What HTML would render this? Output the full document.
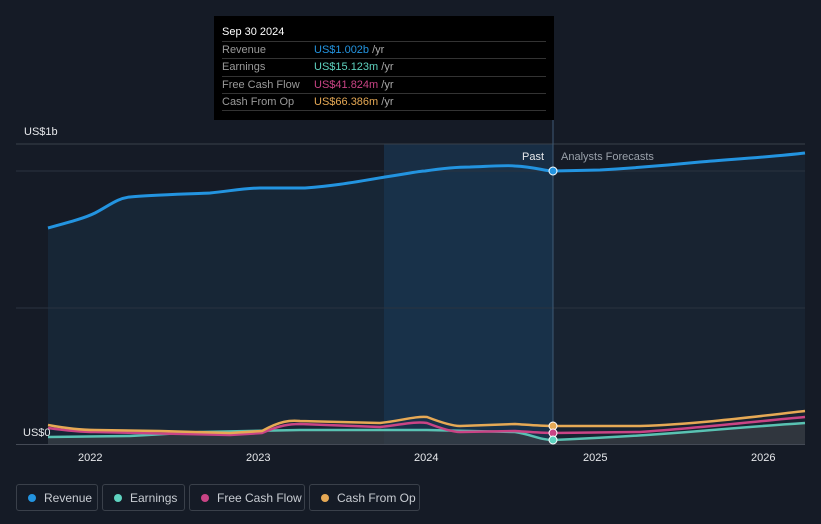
<!DOCTYPE html>
<html><head><style>
body{margin:0;background:#151b26;width:821px;height:524px;overflow:hidden;font-family:"Liberation Sans",sans-serif}
.leg{position:absolute;top:484px;height:27px;border:1px solid #3a404a;border-radius:3px;color:#c8ccd2;font-size:12px;line-height:27px;box-sizing:border-box;padding-left:27px}
.leg i{position:absolute;left:11px;top:9px;width:8px;height:8px;border-radius:50%}
</style></head><body>
<svg width="821" height="524" style="position:absolute;left:0;top:0">
<path d="M48,228 C70,222 85,218 95,213 C110,205 118,198 130,197 C150,195 190,194 210,193 C230,191 245,188 260,188 L305,188 C330,186 345,184 385,177 C405,174 420,171 425,171 C445,168 460,167 470,167 C495,166 510,165 515,166 C535,167 545,171 553,171 L553,444 L48,444Z" fill="#172636"/>
<rect x="384" y="144" width="169" height="300" fill="#1a3550" opacity="0.75"/>
<path d="M553,171 L600,170 C650,167 680,164 700,162 C750,158 780,156 805,153 L805,444 L553,444Z" fill="#182331"/>
<line x1="16" y1="144" x2="805" y2="144" stroke="#39404b"/>
<line x1="16" y1="171" x2="805" y2="171" stroke="#2a3340"/>
<line x1="16" y1="308" x2="805" y2="308" stroke="#2a3340"/>
<line x1="553" y1="120" x2="553" y2="444" stroke="#3e5a75"/>
<path d="M48,228 C70,222 85,218 95,213 C110,205 118,198 130,197 C150,195 190,194 210,193 C230,191 245,188 260,188 L305,188 C330,186 345,184 385,177 C405,174 420,171 425,171 C445,168 460,167 470,167 C495,166 510,165 515,166 C535,167 545,171 553,171 L600,170 C650,167 680,164 700,162 C750,158 780,156 805,153" fill="none" stroke="#2394e0" stroke-width="3"/>
<path d="M48,437 L130,436 L200,432 L300,430 L427,430 L515,432 C530,434 540,440 553,440 C600,438 640,436 700,431 C760,426 790,424 805,423 L805,444 L48,444Z" fill="#3a3e45" opacity="0.7"/>
<path d="M48,437 L130,436 L200,432 L300,430 L427,430 L515,432 C530,434 540,440 553,440 C600,438 640,436 700,431 C760,426 790,424 805,423" fill="none" stroke="#5fd3c0" stroke-width="2.5" opacity="0.9"/>
<path d="M48,428 C70,431 85,432 95,432 L230,435 L262,433 C280,425 290,424 300,424 L380,427 C400,425 415,421 427,423 C445,430 455,432 460,432 L515,431 C530,432 540,433 553,433 L640,432 C700,428 760,421 805,417" fill="none" stroke="#c94485" stroke-width="2.5"/>
<path d="M48,425 C70,429 85,430 95,430 L160,431 L230,433 L262,431 C280,421 290,420 300,421 L380,423 C400,421 415,416 427,417 C445,424 455,426 460,426 L515,424 C530,425 540,426 553,426 L640,426 C700,424 760,416 805,411" fill="none" stroke="#e6a955" stroke-width="2.5"/>
<line x1="16" y1="444.5" x2="805" y2="444.5" stroke="#444a55"/>
<circle cx="553" cy="171" r="4" fill="#2394e0" stroke="#fff" stroke-width="1"/>
<circle cx="553" cy="426" r="4" fill="#e6a955" stroke="#fff" stroke-width="1"/>
<circle cx="553" cy="433" r="4" fill="#c94485" stroke="#fff" stroke-width="1"/>
<circle cx="553" cy="440" r="4" fill="#5fd3c0" stroke="#fff" stroke-width="1"/>
<g font-size="11" fill="#e6e8eb" font-family="Liberation Sans">
<text x="24" y="135">US$1b</text>
<text x="23" y="436">US$0</text>
<text x="522" y="160">Past</text>
<text x="561" y="160" fill="#9aa1aa">Analysts Forecasts</text>
<text x="78" y="461">2022</text><text x="246" y="461">2023</text><text x="414" y="461">2024</text><text x="583" y="461">2025</text><text x="751" y="461">2026</text>
</g>
<rect x="214" y="16" width="340" height="104" fill="#000"/>
<g font-size="11" font-family="Liberation Sans">
<text x="222" y="35" fill="#fff">Sep 30 2024</text>
<line x1="222" y1="41.5" x2="546" y2="41.5" stroke="#333"/>
<text x="222" y="53" fill="#9a9a9a">Revenue</text><text x="314" y="53" fill="#2394e0">US$1.002b <tspan fill="#aaa">/yr</tspan></text>
<line x1="222" y1="58.5" x2="546" y2="58.5" stroke="#333"/>
<text x="222" y="70" fill="#9a9a9a">Earnings</text><text x="314" y="70" fill="#5fd3c0">US$15.123m <tspan fill="#aaa">/yr</tspan></text>
<line x1="222" y1="76.5" x2="546" y2="76.5" stroke="#333"/>
<text x="222" y="88" fill="#9a9a9a">Free Cash Flow</text><text x="314" y="88" fill="#c94485">US$41.824m <tspan fill="#aaa">/yr</tspan></text>
<line x1="222" y1="93.5" x2="546" y2="93.5" stroke="#333"/>
<text x="222" y="105" fill="#9a9a9a">Cash From Op</text><text x="314" y="105" fill="#e6a955">US$66.386m <tspan fill="#aaa">/yr</tspan></text>
<line x1="222" y1="110.5" x2="546" y2="110.5" stroke="#333"/>
</g>
</svg>
<div class="leg" style="left:16px;width:82px"><i style="background:#2394e0"></i>Revenue</div>
<div class="leg" style="left:102px;width:83px"><i style="background:#5fd3c0"></i>Earnings</div>
<div class="leg" style="left:189px;width:116px"><i style="background:#c94485"></i>Free Cash Flow</div>
<div class="leg" style="left:309px;width:111px"><i style="background:#e6a955"></i>Cash From Op</div>
</body></html>
